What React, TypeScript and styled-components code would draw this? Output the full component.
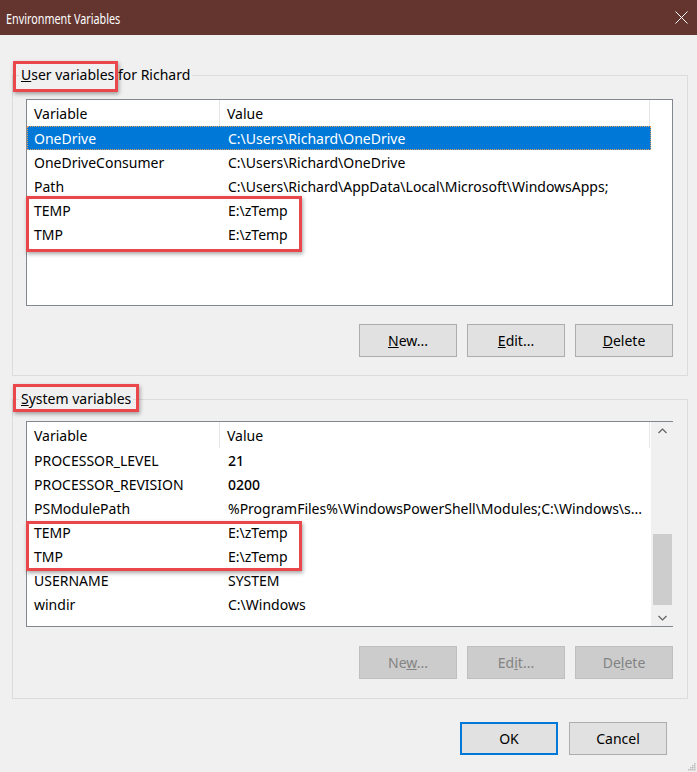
import { FC, ReactNode } from "react";
import styled, { createGlobalStyle, css } from "styled-components";

const GlobalStyle = createGlobalStyle`
  html, body {
    margin: 0;
    padding: 0;
    background: #f0f0f0;
  }
  body {
    font-family: "Noto Sans", "Open Sans", sans-serif;
    font-size: 14px;
    color: #000;
  }
`;

const Window = styled.div`
  width: 697px;
  height: 772px;
  display: flex;
  flex-direction: column;
  background: #f0f0f0;
  overflow: hidden;
`;

const TitleBar = styled.div`
  height: 35px;
  flex: 0 0 35px;
  display: flex;
  align-items: center;
  justify-content: space-between;
  padding: 0 9px 0 6px;
  background: #64352f;
  color: #fff;
  box-sizing: border-box;
`;

const Title = styled.span`
  font-size: 15px;
  display: inline-block;
  transform: scaleX(0.72);
  transform-origin: left center;
  white-space: nowrap;
`;

const CloseButton = styled.div`
  display: flex;
  align-items: center;
  justify-content: center;
  width: 14px;
  height: 14px;
`;

const Content = styled.div`
  display: flex;
  flex-direction: column;
  gap: 13px;
  padding: 30px 9px 0 12px;
`;

const GroupBox = styled.fieldset<{ $padTop: number; $gap: number; $padBottom: number }>`
  margin: 0;
  padding: ${(p) => p.$padTop}px 14px ${(p) => p.$padBottom}px 13px;
  border: 1px solid #dcdcdc;
  min-width: 0;
  display: flex;
  flex-direction: column;
  gap: ${(p) => p.$gap}px;
`;

const Legend = styled.legend`
  padding: 0 2px;
  margin-left: -7px;
  line-height: 20px;
  font-size: 14px;
`;

const Callout = styled.span<{ $top: number; $bottom: number; $right: number }>`
  position: relative;

  &::after {
    content: "";
    position: absolute;
    left: -8px;
    right: ${(p) => p.$right}px;
    top: ${(p) => p.$top}px;
    bottom: ${(p) => p.$bottom}px;
    border: 3px solid #ea474d;
    box-shadow: 1px 2px 4px rgba(0, 0, 0, 0.35);
    pointer-events: none;
  }
`;

const ListView = styled.div<{ $height: number }>`
  height: ${(p) => p.$height}px;
  border: 1px solid #828790;
  background: #fff;
  display: flex;
  box-sizing: border-box;
`;

const Table = styled.div`
  flex: 1;
  display: flex;
  flex-direction: column;
`;

const HeaderRow = styled.div`
  display: grid;
  grid-template-columns: 193px 430px;
  height: 26px;
`;

const HeaderCell = styled.div`
  display: flex;
  align-items: center;
  padding-left: 7px;
  border-right: 1px solid #e5e5e5;
`;

const Row = styled.div<{ $selected?: boolean }>`
  display: grid;
  grid-template-columns: 194px 430px;
  width: 624px;
  height: 24px;
  box-sizing: border-box;
  align-items: center;
  white-space: nowrap;

  ${(p) =>
    p.$selected &&
    css`
      background: #0078d7;
      color: #fff;
      outline: 1px dotted #e0a060;
      outline-offset: -1px;
    `}
`;

const Cell = styled.div<{ $strong?: boolean }>`
  padding-left: 7px;
  overflow: hidden;
  font-weight: ${(p) => (p.$strong ? 500 : 400)};
`;

const Highlight = styled.div<{ $top: number; $bottom: number }>`
  position: relative;

  &::after {
    content: "";
    position: absolute;
    left: -1px;
    width: 276px;
    top: ${(p) => p.$top}px;
    bottom: ${(p) => p.$bottom}px;
    border: 3px solid #ea474d;
    box-shadow: 1px 2px 4px rgba(0, 0, 0, 0.35);
    box-sizing: border-box;
    pointer-events: none;
  }
`;

const ScrollBar = styled.div`
  flex: 0 0 21px;
  display: flex;
  flex-direction: column;
  background: #f0f0f0;
  border-left: 1px solid #f0f0f0;
`;

const ScrollArrow = styled.div`
  height: 17px;
  display: flex;
  align-items: center;
  justify-content: center;
`;

const Track = styled.div`
  flex: 1;
  display: flex;
  flex-direction: column;
  padding: 0 1px;
`;

const Thumb = styled.div<{ $offset: number; $size: number }>`
  margin-top: ${(p) => p.$offset}px;
  height: ${(p) => p.$size}px;
  background: #cdcdcd;
`;

const ButtonRow = styled.div`
  display: flex;
  justify-content: flex-end;
  gap: 10px;
`;

const Button = styled.div<{ $disabled?: boolean; $default?: boolean }>`
  width: 98px;
  height: 33px;
  box-sizing: border-box;
  display: flex;
  align-items: center;
  justify-content: center;
  background: #e1e1e1;
  border: 1px solid #adadad;
  font-size: 14px;

  ${(p) =>
    p.$disabled &&
    css`
      background: #cccccc;
      border-color: #bfbfbf;
      color: #838383;
    `}

  ${(p) =>
    p.$default &&
    css`
      border: 2px solid #0078d7;
    `}
`;

const Footer = styled.div`
  display: flex;
  justify-content: flex-end;
  gap: 11px;
  padding: 23px 30px 0 0;
`;

const GripRow = styled.div`
  margin-top: auto;
  display: flex;
  justify-content: flex-end;
  padding: 0 1px 1px 0;
`;

type Variable = { name: string; value: string; strong?: boolean };

const userTop: Variable[] = [
  { name: "OneDrive", value: "C:\\Users\\Richard\\OneDrive" },
  { name: "OneDriveConsumer", value: "C:\\Users\\Richard\\OneDrive" },
  { name: "Path", value: "C:\\Users\\Richard\\AppData\\Local\\Microsoft\\WindowsApps;" },
];

const tempVars: Variable[] = [
  { name: "TEMP", value: "E:\\zTemp" },
  { name: "TMP", value: "E:\\zTemp" },
];

const systemTop: Variable[] = [
  { name: "PROCESSOR_LEVEL", value: "21", strong: true },
  { name: "PROCESSOR_REVISION", value: "0200", strong: true },
  {
    name: "PSModulePath",
    value: "%ProgramFiles%\\WindowsPowerShell\\Modules;C:\\Windows\\s...",
  },
];

const systemBottom: Variable[] = [
  { name: "USERNAME", value: "SYSTEM" },
  { name: "windir", value: "C:\\Windows" },
];

const Rows: FC<{ items: Variable[]; selected?: string }> = ({ items, selected }) => (
  <>
    {items.map((v) => (
      <Row key={v.name} $selected={v.name === selected}>
        <Cell>{v.name}</Cell>
        <Cell $strong={v.strong}>{v.value}</Cell>
      </Row>
    ))}
  </>
);

const Header = () => (
  <HeaderRow>
    <HeaderCell>Variable</HeaderCell>
    <HeaderCell>Value</HeaderCell>
  </HeaderRow>
);

const Chevron: FC<{ up?: boolean }> = ({ up }) => (
  <svg width="9" height="6" viewBox="0 0 9 6">
    <path
      d={up ? "M0.5 5 L4.5 1 L8.5 5" : "M0.5 1 L4.5 5 L8.5 1"}
      fill="none"
      stroke="#606060"
      strokeWidth="1.2"
    />
  </svg>
);

const ActionButtons: FC<{ disabled?: boolean }> = ({ disabled }) => (
  <ButtonRow>
    <Button $disabled={disabled}>
      {disabled ? (
        <span>
          Ne<u>w</u>...
        </span>
      ) : (
        <span>
          <u>N</u>ew...
        </span>
      )}
    </Button>
    <Button $disabled={disabled}>
      {disabled ? (
        <span>
          Ed<u>i</u>t...
        </span>
      ) : (
        <span>
          <u>E</u>dit...
        </span>
      )}
    </Button>
    <Button $disabled={disabled}>
      {disabled ? (
        <span>
          De<u>l</u>ete
        </span>
      ) : (
        <span>
          <u>D</u>elete
        </span>
      )}
    </Button>
  </ButtonRow>
);

const Group: FC<{
  legend: ReactNode;
  padTop: number;
  gap: number;
  padBottom: number;
  children: ReactNode;
}> = ({ legend, padTop, gap, padBottom, children }) => (
  <GroupBox $padTop={padTop} $gap={gap} $padBottom={padBottom}>
    <Legend>{legend}</Legend>
    {children}
  </GroupBox>
);

export default function App() {
  return (
    <>
      <GlobalStyle />
      <Window>
        <TitleBar>
          <Title>Environment Variables</Title>
          <CloseButton>
            <svg width="13" height="13" viewBox="0 0 13 13">
              <path d="M0.5 0.5 L12.5 12.5 M12.5 0.5 L0.5 12.5" stroke="#fff" strokeWidth="1" />
            </svg>
          </CloseButton>
        </TitleBar>

        <Content>
          <Group
            padTop={14}
            gap={18}
            padBottom={18}
            legend={
              <>
                <Callout $top={-4} $bottom={-8} $right={-4}>
                  <u>U</u>ser variables
                </Callout>{" "}
                for Richard
              </>
            }
          >
            <ListView $height={207}>
              <Table>
                <Header />
                <Rows items={userTop} selected="OneDrive" />
                <Highlight $top={-2} $bottom={-6}>
                  <Rows items={tempVars} />
                </Highlight>
              </Table>
            </ListView>
            <ActionButtons />
          </Group>

          <Group
            padTop={12}
            gap={19}
            padBottom={19}
            legend={
              <Callout $top={-5} $bottom={-4} $right={-8}>
                <u>S</u>ystem variables
              </Callout>
            }
          >
            <ListView $height={206}>
              <Table>
                <Header />
                <Rows items={systemTop} />
                <Highlight $top={1} $bottom={-3}>
                  <Rows items={tempVars} />
                </Highlight>
                <Rows items={systemBottom} />
              </Table>
              <ScrollBar>
                <ScrollArrow>
                  <Chevron up />
                </ScrollArrow>
                <Track>
                  <Thumb $offset={95} $size={71} />
                </Track>
                <ScrollArrow>
                  <Chevron />
                </ScrollArrow>
              </ScrollBar>
            </ListView>
            <ActionButtons disabled />
          </Group>
        </Content>

        <Footer>
          <Button $default>OK</Button>
          <Button>Cancel</Button>
        </Footer>

        <GripRow>
          <svg width="10" height="10" viewBox="0 0 10 10">
            {[
              [8, 2],
              [6, 4],
              [8, 4],
              [4, 6],
              [6, 6],
              [8, 6],
              [2, 8],
              [4, 8],
              [6, 8],
              [8, 8],
            ].map(([x, y]) => (
              <rect key={`${x}-${y}`} x={x} y={y} width="1.5" height="1.5" fill="#bcbcbc" />
            ))}
          </svg>
        </GripRow>
      </Window>
    </>
  );
}
